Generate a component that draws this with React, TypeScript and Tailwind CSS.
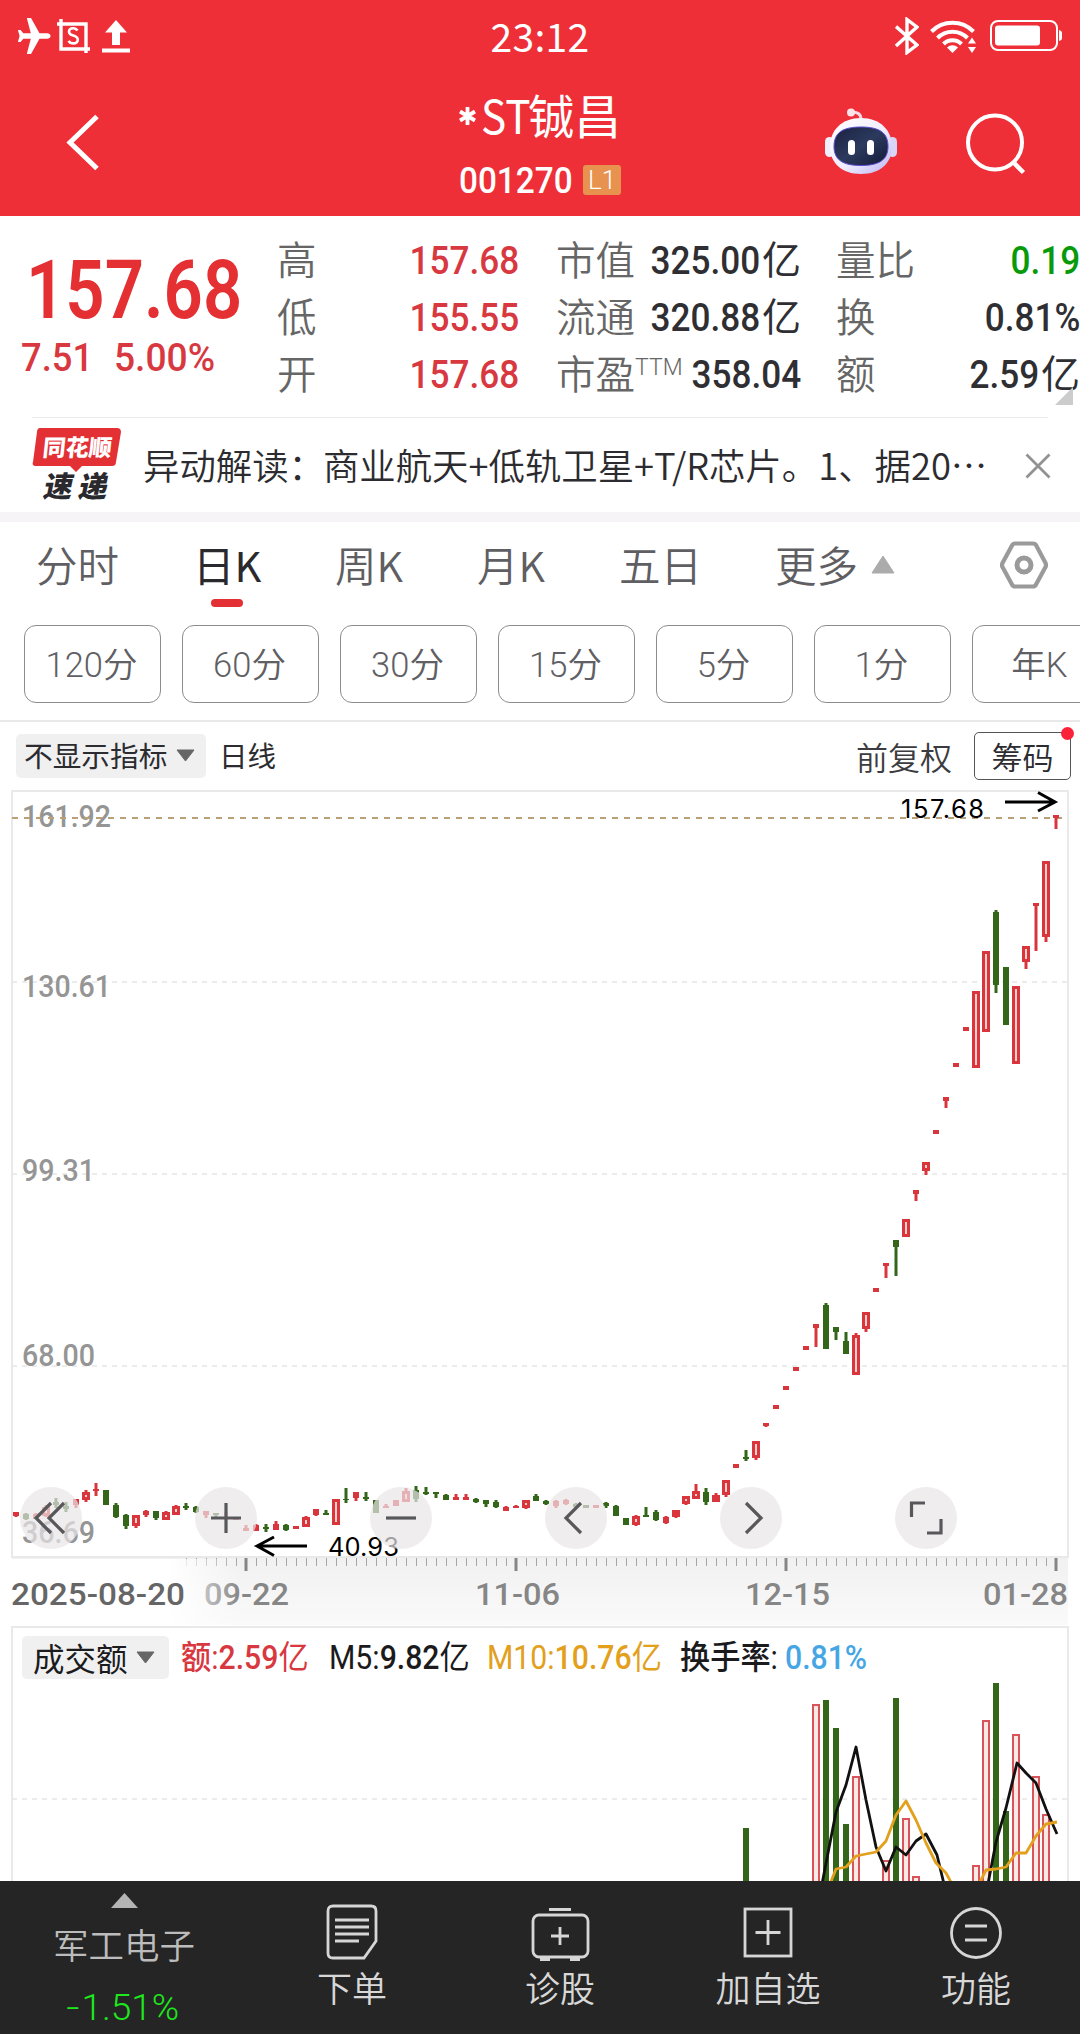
import { type ReactNode } from 'react';
import clsx from 'clsx';

const DIN = "font-['Roboto','Noto_Sans_CJK_SC',sans-serif]";

interface Candle {
  up: boolean;
  high: number;
  top: number;
  bottom: number;
  low: number;
}

// direction, high, body top, body bottom, low (chart space, one candle every 10px)
const RAW = `
r 1512 1512 1516 1517|g 1513 1514 1519 1520|r 1513 1514 1519 1519|r 1505 1507 1516 1517|g 1498 1502 1505 1508
g 1502 1506 1509 1512|r 1499 1499 1505 1508|r 1490 1492 1500 1502|r 1483 1489 1491 1496|g 1490 1490 1505 1505
g 1503 1505 1517 1518|g 1514 1515 1526 1529|r 1515 1515 1526 1528|r 1510 1511 1515 1517|g 1511 1511 1518 1520
r 1511 1512 1520 1520|r 1505 1506 1515 1515|g 1503 1506 1508 1510|g 1506 1507 1512 1513|r 1511 1511 1515 1518
g 1513 1513 1515 1518|r 1512 1517 1519 1520|r 1517 1517 1520 1520|r 1525 1528 1531 1531|r 1524 1525 1531 1531
g 1524 1527 1529 1532|r 1521 1524 1530 1530|g 1524 1525 1530 1531|r 1526 1526 1529 1529|r 1516 1517 1527 1527
r 1509 1509 1515 1516|g 1510 1513 1515 1515|r 1499 1499 1525 1525|g 1488 1499 1500 1503|r 1492 1492 1498 1501
g 1492 1497 1499 1501|g 1500 1500 1513 1513|r 1504 1506 1508 1508|r 1500 1500 1506 1506|r 1488 1491 1502 1502
g 1486 1490 1499 1502|g 1487 1492 1494 1495|g 1492 1492 1494 1498|g 1494 1495 1500 1500|r 1494 1497 1500 1500
r 1494 1497 1500 1500|g 1498 1499 1502 1503|g 1500 1500 1504 1507|g 1500 1502 1507 1508|r 1506 1507 1511 1511
r 1505 1506 1508 1508|r 1500 1500 1508 1509|g 1494 1496 1501 1501|g 1500 1501 1504 1505|r 1500 1501 1506 1508
r 1499 1500 1504 1505|g 1503 1504 1507 1507|g 1505 1505 1508 1508|r 1505 1505 1508 1508|g 1502 1503 1506 1508
g 1505 1506 1516 1516|g 1518 1518 1525 1525|r 1515 1516 1525 1526|g 1507 1515 1517 1517|g 1510 1512 1520 1521
r 1516 1517 1523 1524|r 1510 1510 1517 1518|r 1496 1496 1504 1505|r 1484 1491 1499 1499|g 1488 1492 1502 1505
r 1493 1495 1502 1502|r 1480 1480 1495 1497|r 1464 1464 1468 1468|g 1450 1457 1459 1461|r 1441 1441 1458 1460
r 1423 1423 1426 1427|r 1405 1405 1409 1409|r 1386 1386 1390 1390|r 1367 1367 1371 1371|r 1346 1346 1350 1350
r 1324 1324 1328 1347|g 1303 1305 1349 1349|g 1327 1327 1332 1340|g 1332 1341 1354 1354|r 1333 1335 1375 1375
r 1312 1312 1329 1332|r 1288 1288 1292 1292|r 1263 1263 1266 1278|g 1240 1240 1247 1276|r 1219 1219 1237 1237
r 1190 1190 1194 1201|r 1162 1162 1171 1175|r 1130 1130 1134 1134|r 1097 1097 1101 1108|r 1063 1063 1067 1067
r 1027 1027 1031 1031|r 991 991 1068 1068|r 951 951 1032 1032|g 910 912 985 993|g 967 967 1025 1025
r 986 986 1064 1064|r 946 946 962 969|r 903 903 906 951|r 861 861 937 942|r 815 815 818 829`;

const candles: Candle[] = RAW.trim()
  .split(/[|\n]/)
  .map((row) => {
    const [dir, high, top, bottom, low] = row.trim().split(' ');
    return { up: dir === 'r', high: +high, top: +top, bottom: +bottom, low: +low };
  });

const volumes: { x: number; y: number; up: boolean }[] = [
  { x: 746, y: 1828, up: false },
  { x: 816, y: 1704, up: true },
  { x: 826, y: 1700, up: false },
  { x: 836, y: 1728, up: false },
  { x: 846, y: 1824, up: false },
  { x: 856, y: 1776, up: true },
  { x: 886, y: 1860, up: true },
  { x: 896, y: 1698, up: false },
  { x: 906, y: 1818, up: true },
  { x: 916, y: 1876, up: true },
  { x: 976, y: 1865, up: true },
  { x: 986, y: 1720, up: true },
  { x: 996, y: 1683, up: false },
  { x: 1006, y: 1811, up: false },
  { x: 1016, y: 1734, up: true },
  { x: 1036, y: 1776, up: true },
  { x: 1046, y: 1814, up: true }
];

const M5 = [
  '822,1884 836,1812 846,1785 856,1747 866,1800 876,1847 886,1871 896,1847 906,1855 916,1841 926,1834 937,1855 944,1884',
  '988,1884 996,1842 1006,1808 1017,1763 1026,1773 1036,1783 1046,1809 1057,1834'
];
const M10 = [
  '830,1884 836,1869 846,1867 856,1856 866,1854 876,1852 886,1841 896,1815 906,1801 916,1820 926,1843 936,1863 946,1873 952,1884',
  '979,1884 986,1870 996,1869 1006,1867 1016,1853 1026,1853 1036,1836 1046,1824 1057,1822'
];

const axisLabels = [
  { text: '161.92', y: 827 },
  { text: '130.61', y: 997 },
  { text: '99.31', y: 1181 },
  { text: '68.00', y: 1366 },
  { text: '36.69', y: 1543 }
];

const dates = [
  { text: '09-22', x: 204 },
  { text: '11-06', x: 475 },
  { text: '12-15', x: 745 },
  { text: '01-28', x: 983 }
];

function StatusBar() {
  return (
    <div className="flex h-[72px] items-center justify-between pl-[17px] pr-[17px] text-white">
      <div className="flex w-[300px] items-center">
        <svg width="34" height="38" viewBox="0 0 34 38" fill="currentColor">
          <path d="M33.500 19c0-1.800-1.500-2.700-3.400-2.700h-7.600L14 1h-4.200l4 15.300H6.300L3.600 13H.9l1.700 6-1.700 6h2.700l2.700-3.300h7.500L9.800 37H14l8.500-15.300h7.600c1.900 0 3.400-.9 3.400-2.700z" />
        </svg>
        <svg className="ml-1.5" width="33" height="34" viewBox="0 0 33 34" fill="none" stroke="currentColor" strokeWidth="3.400">
          <path d="M0 5H29V34M4 0V30H33" />
          <path d="M20.500 11.500c-1-1.600-2.600-2.300-4.300-2.300-2.400 0-4.200 1.400-4.200 3.500 0 5 8.800 2.700 8.800 8 0 2.200-1.900 3.700-4.500 3.700-2 0-3.700-.9-4.700-2.600" strokeWidth="2.600" />
        </svg>
        <svg className="ml-3" width="28" height="34" viewBox="0 0 28 34" fill="currentColor">
          <path d="M14 1 25 13.500H18V26H10V13.500H3zM0 29.500H28V33.500H0z" />
        </svg>
      </div>
      <div className="-mt-0.5 text-[39px] leading-none tracking-[0.3px]">23:12</div>
      <div className="flex w-[300px] items-center justify-end">
        <svg width="24" height="38" viewBox="0 0 24 38" fill="none" stroke="currentColor" strokeWidth="3.400">
          <path d="M1 9.500 22 28 12 35.500V2.500L22 10 1 29" />
        </svg>
        <svg className="ml-[11px]" width="47" height="36" viewBox="0 0 47 36" fill="none" stroke="currentColor" strokeWidth="4">
          <path d="M1.500 13.500a29.500 29.500 0 0 1 42 0M7.500 20a21 21 0 0 1 30 0M13.500 26a12.500 12.500 0 0 1 18 0" />
          <path d="M22.500 35 17 29.500a8 8 0 0 1 11 0z" fill="currentColor" stroke="none" />
          <path d="M42 19.500l4 6h-8zM42 35l4-6h-8z" fill="currentColor" stroke="none" />
        </svg>
        <svg className="ml-[13px]" width="73" height="32" viewBox="0 0 73 32" fill="none">
          <rect x="1" y="1" width="66" height="29" rx="7" stroke="white" strokeWidth="2" />
          <rect x="5" y="5.500" width="45" height="20" rx="3" fill="white" />
          <path d="M69 10c2 .5 3 1.500 3 3v5c0 1.500-1 2.500-3 3z" fill="white" />
        </svg>
      </div>
    </div>
  );
}

function Robot() {
  return (
    <svg width="72" height="68" viewBox="0 0 72 68">
      <defs>
        <linearGradient id="shell" x1="0" y1="0" x2="1" y2="1">
          <stop offset="0" stopColor="#ffffff" />
          <stop offset="0.55" stopColor="#f0edff" />
          <stop offset="1" stopColor="#b9b4f2" />
        </linearGradient>
        <linearGradient id="visor" x1="0" y1="0" x2="1" y2="1">
          <stop offset="0" stopColor="#1b2140" />
          <stop offset="0.5" stopColor="#2c3a5e" />
          <stop offset="1" stopColor="#141a38" />
        </linearGradient>
      </defs>
      <path d="M26 4.500c7-1 10 2 10 7" fill="none" stroke="#f7d9e4" strokeWidth="3" />
      <circle cx="26" cy="4.500" r="4" fill="#fbe3ea" />
      <rect x="0" y="29" width="9" height="20" rx="4.500" fill="#f1eefc" />
      <rect x="63" y="29" width="9" height="20" rx="4.500" fill="#d9d5f7" />
      <path d="M36 10c19 0 31 12 31 29 0 16-12 27-31 27S5 55 5 39C5 22 17 10 36 10z" fill="url(#shell)" />
      <path d="M36 19c19 0 27 6 27 19.500C63 52 54 57.500 36 57.500S9 52 9 38.500C9 25 17 19 36 19z" fill="url(#visor)" stroke="#5b4fd0" strokeWidth="1" />
      <rect x="23" y="32" width="7" height="15" rx="3.500" fill="white" />
      <rect x="42" y="32" width="7" height="15" rx="3.500" fill="white" />
    </svg>
  );
}

function TitleBar() {
  return (
    <div className="flex h-36 items-start pl-[65px] text-white">
      <svg className="mt-[41px]" width="36" height="58" viewBox="0 0 36 58" fill="none" stroke="currentColor" strokeWidth="5">
        <path d="M32 3.500 5 29.500 32 55.500" />
      </svg>
      <div className="ml-[349px] mt-[17px] flex w-[180px] flex-col items-center">
        <div className="flex h-[50px] items-center whitespace-nowrap text-[46.500px] leading-none">
          <svg className="mr-[5px] mt-1" width="17" height="18" viewBox="0 0 17 18" stroke="currentColor" strokeWidth="3.800">
            <path d="M8.500 0V18M1 4.500 16 13.500M16 4.500 1 13.500" />
          </svg>
          <span className="inline-block w-[47px] origin-left scale-x-[0.91]">ST</span>
          <span>铖昌</span>
        </div>
        <div className="mt-[26px] flex h-[30px] w-[162px] items-center justify-between">
          <span className={clsx(DIN, 'w-[113px] origin-left scale-x-90 text-[37px] font-medium leading-none')}>001270</span>
          <span className="flex h-[30px] w-[38px] items-center justify-center rounded-[3px] bg-[#e8924f] font-['Roboto'] text-[26px] font-[350] leading-none">L1</span>
        </div>
      </div>
      <div className="ml-[195px] mt-9">
        <Robot />
      </div>
      <svg className="ml-[67px] mt-[41px]" width="62" height="62" viewBox="0 0 62 62" fill="none" stroke="currentColor" strokeWidth="4">
        <circle cx="31" cy="29.500" r="27" />
        <path d="M49 49 59.500 59.500" strokeWidth="4.500" />
      </svg>
    </div>
  );
}

function Stat({ label, sup, value, unit, color = 'text-[#2f2f33]' }: { label: string; sup?: string; value: string; unit?: string; color?: string }) {
  return (
    <div className="flex h-[57px] items-center justify-between">
      <span className="mb-[6px] flex whitespace-nowrap text-[39.500px] font-[350] leading-none text-[#666]">
        {label}
        {sup && <span className={clsx(DIN, 'pt-1 text-[23px] font-light leading-none')}>{sup}</span>}
      </span>
      <span className={clsx('flex items-center justify-end whitespace-nowrap leading-none', color)}>
        <span className={clsx(DIN, 'w-0 text-[39.500px] font-medium')}>
          <span className="float-right origin-right scale-x-[0.89]">{value}</span>
        </span>
        {unit && <span className="mb-[7px] ml-0.5 text-[39px]">{unit}</span>}
      </span>
    </div>
  );
}

function Quote() {
  return (
    <div className="flex h-[201px] pt-4">
      <div className="w-[277px] pt-[20px] text-[#e42f33]">
        <div className={clsx(DIN, 'ml-[26px] h-[78px] origin-left scale-x-[0.85] whitespace-nowrap text-[81px] font-semibold leading-[78px]')}>157.68</div>
        <div className={clsx(DIN, 'ml-[21px] mt-[5px] flex text-[39.500px] font-medium leading-[46px] text-[#d8383f]')}>
          <span className="w-[93px] origin-left scale-x-[0.92]">7.51</span>
          <span className="origin-left scale-x-[0.94]">5.00%</span>
        </div>
      </div>
      <div className="w-[242px]">
        <Stat label="高" value="157.68" color="text-[#d8383f]" />
        <Stat label="低" value="155.55" color="text-[#d8383f]" />
        <Stat label="开" value="157.68" color="text-[#d8383f]" />
      </div>
      <div className="ml-[37px] w-[245px]">
        <Stat label="市值" value="325.00" unit="亿" />
        <Stat label="流通" value="320.88" unit="亿" />
        <Stat label="市盈" sup="TTM" value="358.04" />
      </div>
      <div className="relative ml-[35px] w-[244px]">
        <Stat label="量比" value="0.19" color="text-[#079a0a]" />
        <Stat label="换" value="0.81%" />
        <Stat label="额" value="2.59" unit="亿" />
        <svg className="absolute bottom-3 right-[7px]" width="18" height="18" viewBox="0 0 18 18">
          <path d="M18 0V18H0z" fill="#ccc" />
        </svg>
      </div>
    </div>
  );
}

function NewsRow() {
  return (
    <div className="ml-8 mr-8 flex h-[95px] items-start border-t border-[#e8eaec]">
      <div className="relative mt-[10px] h-[74px] w-[90px]">
        <svg className="absolute inset-0" width="90" height="46" viewBox="0 0 90 46">
          <path d="M8 0H85c3 0 4 2 4 4L84 34c0 3-2 4-4 4H50L44 44 38 38H4c-3 0-4-2-3-4L5 4c0-2 1-4 3-4z" fill="#e33035" />
        </svg>
        <div className="relative flex h-[37px] items-center justify-center text-[23px] font-black leading-none text-white">
          <span className="-skew-x-6">同花顺</span>
        </div>
        <div className="relative mt-[5px] flex justify-center gap-[6px] text-[29px] font-black leading-none text-[#2a2a2e]">
          <span className="-skew-x-12">速</span>
          <span className="-skew-x-12">递</span>
        </div>
      </div>
      <div className="ml-[21px] flex h-[92px] w-[860px] items-center whitespace-nowrap text-[36.400px] font-[350] leading-none text-[#2c2c30]">
        <span>异动解读：</span>
        <span className="-ml-0.5">商业航天+低轨卫星+T/R芯片。1、据20…</span>
      </div>
      <svg className="ml-auto mt-[35px] mr-[-3px]" width="26" height="26" viewBox="0 0 26 26" stroke="#929292" strokeWidth="2.800">
        <path d="M1.500 1.500 24.500 24.500M24.500 1.500 1.500 24.500" />
      </svg>
    </div>
  );
}

const tabs = [
  { name: '分时', cls: 'w-[157px]' },
  { name: '日K', cls: 'w-[142px]', active: true },
  { name: '周K', cls: 'w-[142px]' },
  { name: '月K', cls: 'w-[142px]' },
  { name: '五日', cls: 'w-[156px]' },
  { name: '更多', cls: 'w-[96px]' }
];

function Tabs() {
  return (
    <div className="flex h-[88px] items-start pl-[36px] pt-[22px] text-[41.500px] leading-none">
      {tabs.map((tab) => (
        <div key={tab.name} className={clsx('relative h-[64px] whitespace-nowrap', tab.cls, tab.active ? 'text-[#2a2a2e]' : 'font-[350] text-[#5f5f63]')}>
          {tab.name}
          {tab.active && <span className="absolute left-[18px] top-[55px] h-2 w-8 rounded-full bg-[#e33035]" />}
        </div>
      ))}
      <svg className="mt-[11px]" width="24" height="19" viewBox="0 0 24 19">
        <path d="M12 1 23 18H1z" fill="#ababab" stroke="#ababab" strokeLinejoin="round" />
      </svg>
      <svg className="ml-[105px] mt-[-3px]" width="48" height="48" viewBox="0 0 48 48" fill="none" stroke="#9a9a9a">
        <path d="M15 2.500H33q2 0 3 1.500L45.500 22q1 2 0 4L36 43.500q-1 2-3 2H15q-2 0-3-2L2.500 26q-1-2 0-4L12 4.500q1-2 3-2z" strokeWidth="4.200" />
        <circle cx="24" cy="24" r="7" strokeWidth="5" />
      </svg>
    </div>
  );
}

function Periods() {
  return (
    <div className="flex h-[112px] gap-[21px] overflow-hidden border-b-2 border-[#e9e9e9] pl-6 pt-[15px]">
      {['120分', '60分', '30分', '15分', '5分', '1分', '年K'].map((p) => (
        <div key={p} className={clsx(DIN, 'flex h-[78px] w-[137px] shrink-0 items-center justify-center rounded-xl border border-[#8c8c8c] pt-[3px] pr-0.5 text-[34.500px] font-[350] leading-none text-[#606064]')}>
          {p}
        </div>
      ))}
    </div>
  );
}

function Caret() {
  return (
    <svg width="19" height="13" viewBox="0 0 19 13">
      <path d="M1 1H18L9.500 12z" fill="#666" stroke="#666" strokeLinejoin="round" />
    </svg>
  );
}

function IndicatorRow() {
  return (
    <div className="flex h-[68px] items-center pb-[1px] pl-4 pr-[9px] leading-none text-[#2c2c30]">
      <div className="flex h-11 w-[190px] items-center justify-between rounded-[5px] bg-[#f0f0f0] pl-[8px] pr-[11px] text-[28.700px]">
        <span>不显示指标</span>
        <Caret />
      </div>
      <span className="ml-[13px] text-[28.500px]">日线</span>
      <span className="ml-auto text-[32px] font-[350] text-[#3c3c40]">前复权</span>
      <div className="relative ml-[22px] flex h-12 w-[97px] items-center justify-center rounded-[5px] border border-[#555] text-[31px] font-[350]">
        筹码
        <span className="absolute right-[-4px] top-[-6px] size-[13px] rounded-full bg-[#fb2138]" />
      </div>
    </div>
  );
}

function CandleShape({ x, c }: { x: number; c: Candle }) {
  const h = c.bottom - c.top;
  if (!c.up) {
    return (
      <g fill="#336618">
        <rect x={x - 1.5} y={c.high} width={3} height={c.low - c.high} />
        <rect x={x - 3} y={c.top} width={6} height={h} />
      </g>
    );
  }
  return (
    <g fill="#d8363c">
      <rect x={x - 1.5} y={c.high} width={3} height={c.low - c.high} />
      <rect x={h > 6 ? x - 4 : x - 3} y={c.top} width={h > 6 ? 8 : 6} height={h} />
      {h > 7 && <rect x={x - 1} y={c.top + 3} width={2} height={h - 6} fill="#ffcfcc" />}
    </g>
  );
}

function RoundButton({ children }: { children: ReactNode }) {
  return (
    <button className="flex size-[62px] items-center justify-center rounded-full bg-[#e9e5e8]/70">
      <svg width="34" height="34" viewBox="0 0 34 34" fill="none" stroke="#58585a" strokeWidth="3.200">
        {children}
      </svg>
    </button>
  );
}

function PriceChart() {
  return (
    <div className="relative h-[835px]">
      <svg width="1080" height="835" viewBox="0 790 1080 835" className={DIN}>
        <defs>
          <linearGradient id="axisFade" x1="0" y1="0" x2="0" y2="1">
            <stop offset="0" stopColor="#f1f1f1" />
            <stop offset="1" stopColor="#fafafa" />
          </linearGradient>
          <linearGradient id="leftFade" x1="0" y1="0" x2="1" y2="0">
            <stop offset="0" stopColor="white" />
            <stop offset="0.7" stopColor="white" />
            <stop offset="1" stopColor="white" stopOpacity="0" />
          </linearGradient>
        </defs>
        <rect x="12" y="1558" width="1056" height="68" fill="url(#axisFade)" />
        <path d="M12 1557V791H1068V1557z" fill="white" stroke="#e9e9e9" strokeWidth="2" />
        <path d="M12 982H1068M12 1174H1068M12 1366H1068" stroke="#e6e6e6" strokeWidth="1.500" strokeDasharray="5 5" />

        <g fill="#959595" fontSize="31" fontWeight="500">
          {axisLabels.map((l) => (
            <text key={l.text} x="22" y={l.y} textLength={l.text.length > 5 ? 89 : 73} lengthAdjust="spacingAndGlyphs">
              {l.text}
            </text>
          ))}
        </g>
        <path d="M12 818H1068" stroke="#b9a078" strokeWidth="1.800" strokeDasharray="6 6" />

        {candles.map((c, i) => (
          <CandleShape key={i} x={16 + i * 10} c={c} />
        ))}

        <g fontSize="25.500" className="font-['Inter',sans-serif]">
          <text x="901" y="818" textLength="83">157.68</text>
          <text x="328" y="1556" textLength="71">40.93</text>
        </g>
        <g fill="none" stroke="black" strokeWidth="3">
          <path d="M1005 802H1055M1038 792.500 1055 802 1038 811" />
          <path d="M307 1546H257M274 1537 257 1546 274 1555.500" />
        </g>

        {/* time axis */}
        {Array.from({ length: 88 }, (_, i) => 186 + i * 10).map((x) => {
          const major = x === 246 || x === 516 || x === 786 || x === 1056;
          return <rect key={x} x={major ? x - 1.5 : x} y="1558" width={major ? 3 : 1} height={major ? 13 : 8} fill={major ? '#858585' : '#a5a5a5'} />;
        })}
        <g fill="#868686" fontSize="32" fontWeight="500">
          {dates.map((d) => (
            <text key={d.text} x={d.x} y="1605" textLength="85" lengthAdjust="spacingAndGlyphs">{d.text}</text>
          ))}
        </g>
        <rect x="0" y="1559" width="240" height="66" fill="url(#leftFade)" />
        <text x="11" y="1605" fontSize="32" fontWeight="500" fill="#666" textLength="174" lengthAdjust="spacingAndGlyphs">2025-08-20</text>
      </svg>

      <div className="absolute left-5 top-[697px] flex gap-[113px]">
        <RoundButton>
          <path d="M17 2 2 17 17 32M30 2 15 17 30 32" />
        </RoundButton>
        <RoundButton>
          <path d="M17 2V32M2 17H32" />
        </RoundButton>
        <RoundButton>
          <path d="M2 17H32" />
        </RoundButton>
        <RoundButton>
          <path d="M22 2 7 17 22 32" />
        </RoundButton>
        <RoundButton>
          <path d="M12 2 27 17 12 32" />
        </RoundButton>
        <RoundButton>
          <path d="M2.500 16V2H16M32 18V32H18" />
        </RoundButton>
      </div>
    </div>
  );
}

function VolumeChart() {
  return (
    <div className="relative h-64 overflow-hidden">
      <svg className="absolute inset-0" width="1080" height="256" viewBox="0 1625 1080 256">
        <path d="M12 1890V1627H1068V1890" fill="white" stroke="#e9e9e9" strokeWidth="2" />
        <path d="M12 1799H1068" stroke="#e6e6e6" strokeWidth="1.500" strokeDasharray="5 5" />
        {volumes.map((v) =>
          v.up ? (
            <rect key={v.x} x={v.x - 3} y={v.y + 1} width={6} height={200} fill="#fbe9e6" stroke="#d8535a" strokeWidth="2" />
          ) : (
            <rect key={v.x} x={v.x - 3} y={v.y} width={6} height={200} fill="#336618" />
          )
        )}
        <g fill="none" strokeWidth="2.800" strokeLinejoin="round">
          {M5.map((p) => (
            <polyline key={p} points={p} stroke="#111" />
          ))}
          {M10.map((p) => (
            <polyline key={p} points={p} stroke="#e2a01c" />
          ))}
        </g>
      </svg>
      <div className="relative flex items-center whitespace-nowrap pl-[22px] pt-[11px] leading-none text-[#1b1b1d]">
        <div className="flex h-[43px] w-[147px] items-center justify-between rounded-[5px] bg-[#f0f0f0] pl-[11px] pr-[14px] text-[31.500px]">
          <span>成交额</span>
          <Caret />
        </div>
        <Legend cls="ml-3 w-[148px] text-[#d8383f]" label="额:" value="2.59" unit="亿" />
        <Legend cls="w-[158px]" label="M5:" value="9.82" unit="亿" />
        <Legend cls="w-[193px] text-[#e2a01c]" label="M10:" value="10.76" unit="亿" />
        <Legend cls="w-[105px]" label="换手率:" />
        <Legend cls="text-[#46a6e4]" value="0.81%" />
      </div>
    </div>
  );
}

function Legend({ cls, label, value, unit }: { cls: string; label?: string; value?: string; unit?: string }) {
  return (
    <span className={cls}>
      <span className={clsx(DIN, 'inline-flex origin-left scale-x-[0.915] items-baseline text-[33px]')}>
        <span className="font-[450]">{label}</span>
        <span className="font-medium">{value}</span>
        {unit}
      </span>
    </span>
  );
}

function NavItem({ label, children }: { label: string; children: ReactNode }) {
  return (
    <div className="flex w-[208px] flex-col items-center pt-[22px]">
      <svg width="60" height="60" viewBox="0 0 60 60" fill="none" stroke="#d6d6d6" strokeWidth="2.800">
        {children}
      </svg>
      <span className="mt-[6px] text-[35px] font-[350] leading-none text-[#d8d8d8]">{label}</span>
    </div>
  );
}

function BottomNav() {
  return (
    <div className="flex h-[153px] bg-[#252525]">
      <div className="flex w-[248px] flex-col items-center pt-3 leading-none">
        <svg width="27" height="15" viewBox="0 0 27 15">
          <path d="M13.500 0 27 15H0z" fill="#b4b4b4" />
        </svg>
        <span className="mt-[18px] text-[35.500px] font-[350] text-[#bcbcbc]">军工电子</span>
        <span className={clsx(DIN, 'mt-[27px] flex items-center text-[37px] font-[350] text-[#1ee81e]')}>
          <span className="mr-0.5 inline-block origin-right scale-x-125">-</span>1.51%
        </span>
      </div>
      <NavItem label="下单">
        <path d="M11 3H49q5 0 5 5V38L42 55H11q-5 0-5-5V8q0-5 5-5z" />
        <path d="M13 17H47M13 24H47M13 31H47M13 38H37" />
      </NavItem>
      <NavItem label="诊股">
        <rect x="3" y="12" width="55" height="42" rx="6" />
        <path d="M19 6.500H41M10 56.500H20M40 56.500H50M30 24V42M21 33H39" />
      </NavItem>
      <NavItem label="加自选">
        <rect x="7" y="6" width="46" height="47" />
        <path d="M30 17V42M17.500 29.500H42.500" />
      </NavItem>
      <NavItem label="功能">
        <circle cx="30" cy="30" r="24.500" />
        <path d="M19 23H41M19 37H41" />
      </NavItem>
    </div>
  );
}

export default function App() {
  return (
    <div className="flex h-[2034px] w-[1080px] flex-col overflow-hidden bg-white font-['Noto_Sans_CJK_SC',sans-serif]">
      <header className="bg-[#ee2f37]">
        <StatusBar />
        <TitleBar />
      </header>
      <Quote />
      <NewsRow />
      <div className="h-[10px] bg-[#f6f4f6]" />
      <Tabs />
      <Periods />
      <IndicatorRow />
      <PriceChart />
      <VolumeChart />
      <BottomNav />
    </div>
  );
}
